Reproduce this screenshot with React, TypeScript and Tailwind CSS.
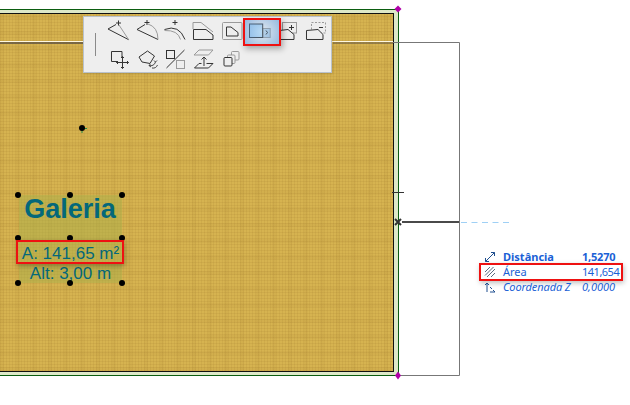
import React from 'react';

const Cell = ({ children }: { children: React.ReactNode }) => (
  <svg width="28.33" height="29" viewBox="0 0 28.33 29" fill="none" strokeWidth="1" stroke="#333" className="block shrink-0 overflow-visible">
    {children}
  </svg>
);

const G = '#9a9a9a';

const Plus = ({ x, y, r = 2.5, c = '#333' }: { x: number; y: number; r?: number; c?: string }) => (
  <path d={`M${x - r} ${y}H${x + r}M${x} ${y - r}V${y + r}`} stroke={c} />
);

const topIcons = [
  <>
    <path d="M4 13 12 8.5M4 13 24.7 23.7" />
    <path d="M15 9 24.7 23.7" stroke={G} />
    <Plus x={14.5} y={7} />
  </>,
  <>
    <path d="M4 13.5 12 8.5M4 13.5 25 23.5" />
    <path d="M15 8Q25 11 25 23.5" stroke={G} />
    <Plus x={14} y={6.5} />
  </>,
  <>
    <path d="M3.5 13.5Q18 8 24 23.5" />
    <path d="M3.5 14.5Q17 14 19.5 23.5" stroke={G} />
    <Plus x={14} y={6.5} />
  </>,
  <>
    <path d="M4 13V6.5H12L24 16" stroke={G} />
    <path d="M4.5 13.5H17L24 19V23.5H4.5Z" />
  </>,
  <>
    <rect x="4.5" y="6.5" width="19.5" height="17" rx="1" stroke={G} />
    <path d="M8.5 11H13L20 16.5V20H8.5Z" />
  </>,
];

const moreTop = [
  <>
    <rect x="8.5" y="6.5" width="14" height="10.5" stroke={G} />
    <Plus x={17.5} y={11.5} />
    <path d="M5.5 14.5 14 13.5 20 18.5V23.5H5.5Z" fill="#eeeeee" />
  </>,
  <>
    <rect x="8.5" y="6.5" width="14" height="10.5" stroke={G} strokeDasharray="2 1.5" />
    <path d="M16 11.5H20" />
    <path d="M3.5 14.5 15 13.5 20 18.5V23.5H3.5Z" fill="#eeeeee" />
  </>,
];

const bottomIcons = [
  <>
    <path d="M13 16.5H7.5V6.5H18V12" />
    <path d="M18.5 11.5V23.5M12.5 17.5H24.5M17 13 18.5 11.5 20 13M17 22 18.5 23.5 20 22M14 16 12.5 17.5 14 19M23 16 24.5 17.5 23 19" />
  </>,
  <>
    <path d="M6 12 14.5 6 21.500 11 17 18.500 9 17Z" />
    <path d="M16 20.500A5 5 0 0 0 22.500 17M19 23A5 5 0 0 0 24.500 20M21 15.500 22.500 17 24 15.500M17.500 19 16 20.500 18 22" stroke="#444" />
  </>,
  <>
    <rect x="5.5" y="5.5" width="8" height="8" />
    <path d="M5.5 23 23.5 5" />
    <rect x="15.5" y="15.5" width="8" height="8" stroke={G} />
  </>,
  <>
    <path d="M10 5H24L19.5 10H5Z" stroke={G} />
    <path d="M15 21V12M12.5 14.5 15 12 17.5 14.5" />
    <path d="M12.5 18.5H10L5.5 23H19.5L24 18.5H17.5" />
  </>,
  <>
    <rect x="13.5" y="6.5" width="7.5" height="8.5" rx="1" stroke={G} />
    <rect x="9.5" y="10" width="7.5" height="8.5" rx="1" stroke={G} fill="#eeeeee" />
    <rect x="6" y="12.5" width="8" height="8.5" rx="1" fill="#eeeeee" />
  </>,
];

const Toolbar = () => (
  <div className="absolute left-[83px] top-[16px] flex w-[249px] h-[57px] bg-[#eeeeee] border border-[#b9c2cc] shadow-[1px_1px_2px_rgba(0,0,0,0.12)]">
    <div className="w-[22px] flex items-center justify-start pl-[11px]">
      <div className="w-px h-[23px] bg-[#8a8a8a]" />
    </div>
    <div className="flex flex-col -mt-px">
      <div className="flex">
        {topIcons.map((ic, i) => (
          <Cell key={i}>{ic}</Cell>
        ))}
        <Cell>
          <rect x="16.7" y="12.5" width="7.5" height="9" fill="#bcd3e6" stroke={G} />
          <rect x="3.5" y="8" width="13.2" height="13.5" fill="#bcdcf5" />
          <path d="M20 14.5 21.5 16.5 20 18.5" />
        </Cell>
        {moreTop.map((ic, i) => (
          <Cell key={i}>{ic}</Cell>
        ))}
      </div>
      <div className="flex">
        {bottomIcons.map((ic, i) => (
          <Cell key={i}>{ic}</Cell>
        ))}
      </div>
    </div>
  </div>
);

const Overlay = () => (
  <svg width="630" height="405" className="absolute left-0 top-0" fill="none">
    <path d="M0 41.5H393" stroke="#fff8e0" />
    <path d="M0 43H83" stroke="#5c5140" strokeWidth="1.5" />
    <path d="M333 43H393" stroke="#5c5140" strokeWidth="1" />
    <path d="M393 42.5H459.5V375.5H398" stroke="#777" />
    <path d="M392 192.5H404" stroke="#333" />
    <path d="M402 222H459" stroke="#4a4a4a" strokeWidth="2" />
    <path d="M461 222.5H510" stroke="#9fd0f5" strokeDasharray="6 4.5" />
    <path d="M395 219 401 225M401 219 395 225" stroke="#333" strokeWidth="2" />
    <path d="M398 5.500 401.500 9 398 12.500 394.500 9Z" fill="#b000a8" />
    <path d="M398 371.500 401 375.500 398 379.500 395 375.500Z" fill="#b000a8" />
    <path d="M82 128V133M82 128.500H87" stroke="#1a8a4a" />
    <circle cx="82" cy="128" r="3" fill="#000" />
    {[18, 70, 122].map((x) =>
      [195, 238, 283].map((y) => <circle key={`${x}-${y}`} cx={x} cy={y} r="3" fill="#000" />),
    )}
  </svg>
);

const Stats = () => (
  <div className="absolute left-[479px] top-[249px] w-[144px] text-[11px] leading-[15px] text-[#1a5fd6] font-['Noto_Sans',sans-serif]">
    <div className="flex h-[15px] items-center font-bold pl-[5px]">
      <svg width="12" height="12" viewBox="0 0 12 12" fill="none" stroke="#1f4f8f" className="mr-[7px]">
        <path d="M1.500 10.500 10.500 1.500M1.500 7V10.500H5M7 1.500H10.500V5" />
      </svg>
      <span className="w-[79px]">Distância</span>
      <span className="-tracking-[0.2px]">1,5270</span>
    </div>
    <div className="flex h-[15px] items-center pl-[5px]">
      <svg width="12" height="12" viewBox="0 0 12 12" fill="none" stroke="#5a6b80" className="mr-[7px]">
        <path d="M1 6 6 1M1 9.500 9.500 1M3 11 11 3M7 11 11 7" />
      </svg>
      <span className="w-[79px]">Área</span>
      <span className="-tracking-[0.5px]">141,654</span>
    </div>
    <div className="flex h-[15px] items-center italic pl-[5px]">
      <svg width="12" height="12" viewBox="0 0 12 12" fill="none" stroke="#1f4f8f" className="mr-[7px]">
        <path d="M3 11V2M1 4 3 2 5 4M6 6 8 8M9 9 11 11M6 11H11" />
      </svg>
      <span className="w-[79px] -tracking-[0.1px]">Coordenada Z</span>
      <span>0,0000</span>
    </div>
  </div>
);

export default function App() {
  return (
    <div className="relative w-[630px] h-[405px] overflow-hidden bg-white pt-[9px]">
      {/* slab: wall outline + fill */}
      <div className="w-[399px] h-[367px] border-t border-r-[1.5px] border-b border-[#0b5d10] bg-[#dde8c8] pt-[3px] pr-[4px] pb-[3px]">
        <div className="h-full border-t border-r border-b border-[#111] bg-[#d6b350] bg-[repeating-linear-gradient(0deg,rgba(140,100,30,0.1)_0_1px,transparent_1px_3px),repeating-linear-gradient(90deg,rgba(140,100,30,0.1)_0_1px,transparent_1px_3px),repeating-linear-gradient(90deg,rgba(140,100,30,0.06)_0_4px,transparent_4px_16px),repeating-linear-gradient(0deg,rgba(140,100,30,0.06)_0_4px,transparent_4px_16px)]" />
      </div>

      {/* zone stamp */}
      <div className="absolute left-[19px] top-[195px] w-[103px] h-[88px] bg-[#aab04a]/50 font-['Liberation_Sans',sans-serif] text-[#04687a] text-center">
        <div className="h-[26px] mt-[1px] -ml-[1px] text-[27px] font-bold leading-[26px]">Galeria</div>
        <div className="text-[17px] leading-[20px] mt-[22px]">A: 141,65 m²</div>
        <div className="text-[17px] leading-[19px]">Alt: 3,00 m</div>
      </div>

      <Overlay />
      <Toolbar />

      {/* selected tool */}
      <div className="absolute left-[243px] top-[18px] w-[38px] h-[28px] border-2 border-[#ee1111] shadow-[2px_3px_6px_rgba(0,0,0,0.3)] bg-[radial-gradient(circle,rgba(170,210,240,0.15),rgba(90,150,215,0.6))]" />
      <div className="absolute left-[16px] top-[240px] w-[108px] h-[24px] border-2 border-[#ee1111] shadow-[1px_2px_5px_rgba(0,0,0,0.3)]" />
      <div className="absolute left-[479px] top-[263px] w-[144px] h-[18px] border-2 border-[#ee1111] shadow-[1px_2px_5px_rgba(0,0,0,0.25)]" />

      <Stats />
    </div>
  );
}
